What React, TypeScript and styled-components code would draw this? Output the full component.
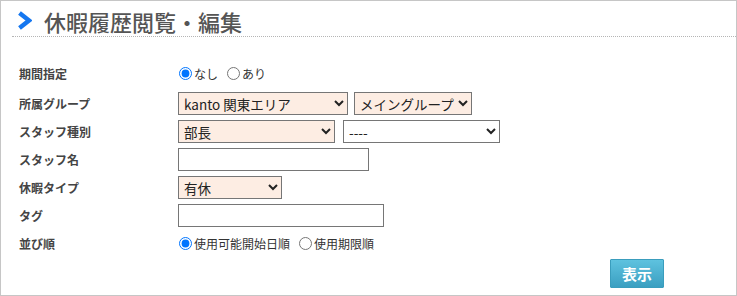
import { FC } from 'react';
import styled, { createGlobalStyle } from 'styled-components';

const GlobalStyle = createGlobalStyle`
  html, body {
    margin: 0;
    padding: 0;
    background: #fff;
  }
  body {
    font-family: "Noto Sans CJK JP", "Noto Sans", sans-serif;
    color: #333;
  }
`;

const Chevron: FC = () => (
  <svg width="15" height="19" viewBox="0 0 15 19">
    <path d="M2.5 2 L12 9.5 L2.5 17" fill="none" stroke="#1577f0" strokeWidth="4.4" strokeLinejoin="miter" />
  </svg>
);

export default function App() {
  return (
    <>
      <GlobalStyle />
      <StyledPage>
        <StyledTitle>
          <Chevron />
          <h1>休暇履歴閲覧・編集</h1>
        </StyledTitle>
        <StyledForm>
          <Row $first>
            <Label>期間指定</Label>
            <Field>
              <RadioLabel>
                <input type="radio" name="period" defaultChecked />
                なし
              </RadioLabel>
              <RadioLabel>
                <input type="radio" name="period" />
                あり
              </RadioLabel>
            </Field>
          </Row>
          <Row>
            <Label>所属グループ</Label>
            <Field>
              <Select $width={170} $tinted>
                <option>kanto 関東エリア</option>
              </Select>
              <Select $width={118} $tinted>
                <option>メイングループ</option>
              </Select>
            </Field>
          </Row>
          <Row>
            <Label>スタッフ種別</Label>
            <Field $gap={8}>
              <Select $width={157} $tinted>
                <option>部長</option>
              </Select>
              <Select $width={157}>
                <option>----</option>
              </Select>
            </Field>
          </Row>
          <Row>
            <Label>スタッフ名</Label>
            <Field>
              <TextInput $width={191} type="text" />
            </Field>
          </Row>
          <Row>
            <Label>休暇タイプ</Label>
            <Field>
              <Select $width={104} $tinted>
                <option>有休</option>
              </Select>
            </Field>
          </Row>
          <Row>
            <Label>タグ</Label>
            <Field>
              <TextInput $width={206} type="text" />
            </Field>
          </Row>
          <Row>
            <Label>並び順</Label>
            <Field>
              <RadioLabel>
                <input type="radio" name="order" defaultChecked />
                使用可能開始日順
              </RadioLabel>
              <RadioLabel>
                <input type="radio" name="order" />
                使用期限順
              </RadioLabel>
            </Field>
          </Row>
        </StyledForm>
        <StyledFooter>
          <SubmitButton type="button">表示</SubmitButton>
        </StyledFooter>
      </StyledPage>
    </>
  );
}

const StyledPage = styled.div`
  box-sizing: border-box;
  width: 737px;
  height: 296px;
  border: 1px solid #c6c6c6;
  padding: 0 0 0 11px;
`;

const StyledTitle = styled.div`
  display: flex;
  align-items: center;
  gap: 12px;
  height: 36px;
  padding-left: 5px;
  padding-top: 4px;
  box-sizing: border-box;
  border-bottom: 1px dotted #b5b5b5;

  > h1 {
    margin: 0;
    font-size: 22px;
    font-weight: 500;
    color: #555;
    line-height: 1;
  }
`;

const StyledForm = styled.div`
  display: flex;
  flex-direction: column;
  padding: 22px 0 0 7px;
`;

const Row = styled.div<{ $first?: boolean }>`
  display: grid;
  grid-template-columns: 159px 1fr;
  align-items: center;
  height: 28px;
  margin-bottom: ${({ $first }) => ($first ? '2px' : '0')};
`;

const Label = styled.div`
  font-size: 12px;
  font-weight: bold;
  color: #444;
`;

const Field = styled.div<{ $gap?: number }>`
  display: flex;
  align-items: center;
  gap: ${({ $gap }) => $gap ?? 6}px;
`;

const RadioLabel = styled.label`
  display: inline-flex;
  align-items: center;
  font-size: 12px;
  color: #333;
  margin-right: 2px;

  > input {
    margin: 0 2px 0 1px;
    width: 13px;
    height: 13px;
  }
`;

const Select = styled.select<{ $width: number; $tinted?: boolean }>`
  box-sizing: border-box;
  width: ${({ $width }) => $width}px;
  height: 23px;
  padding: 0 0 0 1px;
  border: 1px solid #767676;
  border-radius: 0;
  background-color: ${({ $tinted }) => ($tinted ? '#fdede3' : '#fff')};
  font-family: "Noto Sans CJK JP", sans-serif;
  font-size: 13.5px;
  color: #222;
`;

const TextInput = styled.input<{ $width: number }>`
  box-sizing: border-box;
  width: ${({ $width }) => $width}px;
  height: 23px;
  border: 1px solid #767676;
  border-radius: 0;
  padding: 0 4px;
  font-size: 13px;
`;

const StyledFooter = styled.div`
  display: flex;
  justify-content: flex-end;
  padding: 2px 72px 0 0;
`;

const SubmitButton = styled.button`
  width: 54px;
  height: 29px;
  border: 1px solid #3a9dbd;
  border-radius: 1px;
  background: linear-gradient(#5ec2df, #3b9fc1);
  color: #fff;
  font-family: "Noto Sans CJK JP", sans-serif;
  font-size: 15px;
  font-weight: bold;
  padding: 0;
`;
